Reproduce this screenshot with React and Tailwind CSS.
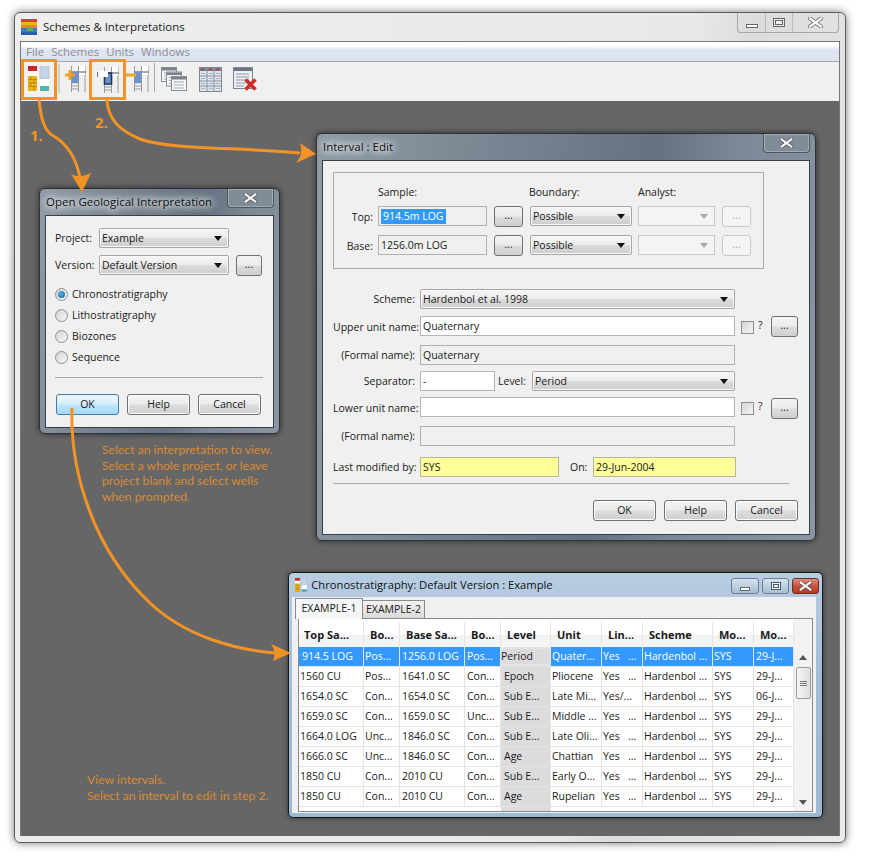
const btnClass =
  "flex items-center justify-center rounded-[3px] border border-[#707070] bg-[linear-gradient(#f4f4f4,#ebebeb_48%,#dddddd_52%,#cfcfcf)] shadow-[inset_0_0_0_1px_#fbfbfb]";

function Button({ className = "", children }) {
  return <div className={`${btnClass} ${className}`}>{children}</div>;
}

function Dots({ className = "", disabled }) {
  return (
    <div
      className={`flex items-end justify-center rounded-[3px] border pb-[2px] ${
        disabled
          ? "border-[#c9c9c9] bg-[#f4f4f4] text-[#a8a8a8]"
          : "border-[#707070] bg-[linear-gradient(#f4f4f4,#ebebeb_48%,#dddddd_52%,#cfcfcf)] text-[#222]"
      } ${className}`}
    >
      ...
    </div>
  );
}

function Combo({ value, className = "", disabled }) {
  return (
    <div
      className={`flex items-center justify-between border pl-[2px] pr-[6px] ${
        disabled
          ? "border-[#c9c9c9] bg-[#f4f4f4]"
          : "rounded-[2px] border-[#a5a5a5] bg-[linear-gradient(#f6f6f6,#ececec_48%,#dcdcdc_52%,#cdcdcd)] shadow-[inset_0_0_0_1px_#f8f8f8]"
      } ${className}`}
    >
      <span className="pt-[1px]">{value}</span>
      <svg width="8" height="5" viewBox="0 0 8 5">
        <path d="M0 0h8L4 5z" fill={disabled ? "#aaaaaa" : "#111111"} />
      </svg>
    </div>
  );
}

function Field({ value, className = "", tone = "white" }) {
  const tones = {
    white: "bg-white border-[#b5b5b5]",
    off: "bg-[#f0f0f0] border-[#b0b0b0]",
    note: "bg-[#ffff99] border-[#b5b5a0]",
  };
  return (
    <div className={`flex items-center border pl-[2px] pt-[1px] ${tones[tone]} ${className}`}>{value}</div>
  );
}

function Radio({ label, on }) {
  return (
    <div className="flex h-[21px] items-center gap-[4px]">
      <span className="flex h-[13px] w-[13px] items-center justify-center rounded-full border border-[#8e8f8f] bg-[linear-gradient(135deg,#d4d4d4,#f6f6f6)]">
        {on && <span className="h-[7px] w-[7px] rounded-full bg-[radial-gradient(circle_at_40%_40%,#5fb2e8,#0b5f95)]" />}
      </span>
      <span className="pt-[1px]">{label}</span>
    </div>
  );
}

function XGlyph({ w = 13, h = 10 }) {
  return (
    <svg width={w} height={h} viewBox="0 0 15 11">
      <path d="M2 1.500 13 9.500M13 1.500 2 9.500" stroke="#555" strokeWidth="4" strokeLinecap="square" />
      <path d="M2 1.500 13 9.500M13 1.500 2 9.500" stroke="#fff" strokeWidth="2.400" strokeLinecap="square" />
    </svg>
  );
}

function Dialog({ title, className = "", bodyClass = "", children }) {
  return (
    <div
      className={`absolute flex flex-col rounded-[6px] border border-[#2e3236] bg-[linear-gradient(100deg,#8f9ba6,#7d8995_25%,#647281_60%,#7c8996_75%,#8a96a2)] px-[5px] pb-[5px] shadow-[0_0_6px_rgba(0,0,0,0.6)] ${className}`}
    >
      <div className="flex h-[26px] shrink-0 items-center justify-between">
        <span className="pl-[1px] text-[11.500px] text-[#111] [text-shadow:0_0_7px_#fff,0_0_9px_#fff,0_0_12px_#fff]">{title}</span>
        <div className="flex h-[19px] w-[47px] items-center justify-center self-start rounded-b-[4px] border border-t-0 border-[#4d5862] bg-[#808c98] shadow-[inset_0_0_0_1px_#a2acb5]">
          <XGlyph />
        </div>
      </div>
      <div className={`flex-1 border border-[#3a3f44] bg-[#f0f0f0] text-[10.500px] text-[#1a1a1a] ${bodyClass}`}>{children}</div>
    </div>
  );
}

function OpenDialog() {
  return (
    <Dialog title="Open Geological Interpretation" className="left-[18px] top-[87px] h-[246px] w-[241px]" bodyClass="pl-[9px] pr-[10px] pt-[12px]">
      <div className="flex h-[20px] items-center">
        <span className="w-[44px] pt-[1px]">Project:</span>
        <Combo value="Example" className="h-[20px] w-[130px]" />
      </div>
      <div className="mt-[7px] flex h-[20px] items-center">
        <span className="w-[44px] pt-[1px]">Version:</span>
        <Combo value="Default Version" className="h-[20px] w-[130px]" />
        <Dots className="ml-[7px] h-[21px] w-[26px]" />
      </div>
      <div className="mt-[9px]">
        <Radio label="Chronostratigraphy" on />
        <Radio label="Lithostratigraphy" />
        <Radio label="Biozones" />
        <Radio label="Sequence" />
      </div>
      <div className="mt-[9px] h-px bg-[#a9a9a9]" />
      <div className="mt-[16px] flex gap-[8px] pl-[1px]">
        <div className="flex h-[21px] w-[63px] items-center justify-center rounded-[3px] border border-[#3c7fb1] bg-[linear-gradient(#eaf6fd,#d6effc_48%,#bee6fd_52%,#a7d9f5)]">OK</div>
        <Button className="h-[21px] w-[63px]">Help</Button>
        <Button className="h-[21px] w-[63px]">Cancel</Button>
      </div>
    </Dialog>
  );
}

function Label({ children }) {
  return <span className="w-[87px] shrink-0 whitespace-nowrap pr-[5px] pt-[1px] text-right">{children}</span>;
}

function SampleRow({ label, children, mt }) {
  return (
    <div className={`flex items-start ${mt}`}>
      <span className="h-[20px] w-[43px] pr-[5px] pt-[1px] text-right leading-[20px]">{label}</span>
      {children}
      <Dots className="ml-[7px] h-[21px] w-[29px]" />
      <Combo value="Possible" className="ml-[7px] h-[20px] w-[102px]" />
      <Combo value="" disabled className="ml-[6px] h-[20px] w-[77px]" />
      <Dots disabled className="ml-[7px] h-[21px] w-[29px]" />
    </div>
  );
}

function UnitCheck({ dotsClass = "" }) {
  return (
    <>
      <span className="ml-[6px] mt-[5px] h-[13px] w-[13px] border border-[#8e8f8f] bg-[linear-gradient(135deg,#d4d4d4,#f6f6f6)]" />
      <span className="ml-[4px] mt-[2px] w-[6px]">?</span>
      <Dots className={`ml-[7px] h-[21px] w-[27px] ${dotsClass}`} />
    </>
  );
}

function EditDialog() {
  return (
    <Dialog title="Interval : Edit" className="left-[295px] top-[32px] h-[408px] w-[500px]" bodyClass="pl-[10px] pt-[11px]">
      <div className="h-[97px] w-[431px] border border-[#a9a9a9] pl-[1px] pt-[13px]">
        <div className="flex h-[13px] items-center leading-[13px]">
          <span className="ml-[43px] w-[151px]">Sample:</span>
          <span className="w-[109px]">Boundary:</span>
          <span>Analyst:</span>
        </div>
        <SampleRow label="Top:" mt="mt-[7px]">
          <Field
            className="h-[20px] w-[109px]"
            tone="off"
            value={<span className="bg-[#3399ff] px-[2px] text-white">914.5m LOG</span>}
          />
        </SampleRow>
        <SampleRow label="Base:" mt="mt-[8px]">
          <Field className="h-[20px] w-[109px]" tone="off" value="1256.0m LOG" />
        </SampleRow>
      </div>
      <div className="mt-[20px] flex h-[20px] items-center">
        <Label>Scheme:</Label>
        <Combo value="Hardenbol et al. 1998" className="h-[20px] w-[315px]" />
      </div>
      <div className="mt-[7px] flex items-start">
        <span className="w-[87px] shrink-0 whitespace-nowrap pr-[5px] pt-[1px] text-right leading-[20px]">Upper unit name:</span>
        <Field value="Quaternary" className="h-[20px] w-[315px]" />
        <UnitCheck />
      </div>
      <div className="mt-[8px] flex items-center">
        <Label>(Formal name):</Label>
        <Field value="Quaternary" tone="off" className="h-[20px] w-[315px]" />
      </div>
      <div className="mt-[6px] flex items-center">
        <Label>Separator:</Label>
        <Field value="-" className="h-[20px] w-[75px]" />
        <span className="ml-[3px] w-[34px] pt-[1px]">Level:</span>
        <Combo value="Period" className="h-[20px] w-[203px]" />
      </div>
      <div className="mt-[6px] flex h-[20px] items-start">
        <span className="w-[87px] shrink-0 whitespace-nowrap pr-[5px] pt-[1px] text-right leading-[20px]">Lower unit name:</span>
        <Field value="" className="h-[20px] w-[315px]" />
        <UnitCheck dotsClass="mt-[1px]" />
      </div>
      <div className="mt-[9px] flex items-center">
        <Label>(Formal name):</Label>
        <Field value="" tone="off" className="h-[20px] w-[315px]" />
      </div>
      <div className="mt-[11px] flex items-center">
        <Label>Last modified by:</Label>
        <Field value="SYS" tone="note" className="h-[20px] w-[139px]" />
        <span className="ml-[11px] w-[23px] pt-[1px]">On:</span>
        <Field value="29-Jun-2004" tone="note" className="h-[20px] w-[143px]" />
      </div>
      <div className="mt-[6px] h-px w-[456px] bg-[#a9a9a9]" />
      <div className="ml-[260px] mt-[16px] flex gap-[8px]">
        <Button className="h-[21px] w-[63px]">OK</Button>
        <Button className="h-[21px] w-[63px]">Help</Button>
        <Button className="h-[21px] w-[63px]">Cancel</Button>
      </div>
    </Dialog>
  );
}

const columns = [65, 36, 65, 36, 50, 51, 41, 70, 41, 40];
const cellPad = ["pl-[1px]", "pl-[1px]", "pl-[2px]", "pl-[2px]", "pl-[3px]", "pl-[1px]", "pl-[1px]", "pl-[1px]", "pl-[1px]", "pl-[2px]"];
const headers = ["Top Sa...", "Bo...", "Base Sa...", "Bo...", "Level", "Unit", "Lin...", "Scheme", "Mo...", "Mo..."];
const rows = [
  ["914.5 LOG", "Pos...", "1256.0 LOG", "Pos...", "Period", "Quater...", "Yes   ...", "Hardenbol ...", "SYS", "29-J..."],
  ["1560 CU", "Pos...", "1641.0 SC", "Con...", "Epoch", "Pliocene", "Yes   ...", "Hardenbol ...", "SYS", "29-J..."],
  ["1654.0 SC", "Con...", "1654.0 SC", "Con...", "Sub E...", "Late Mi...", "Yes/...", "Hardenbol ...", "SYS", "06-J..."],
  ["1659.0 SC", "Con...", "1659.0 SC", "Unc...", "Sub E...", "Middle ...", "Yes   ...", "Hardenbol ...", "SYS", "29-J..."],
  ["1664.0 LOG", "Unc...", "1846.0 SC", "Con...", "Sub E...", "Late Oli...", "Yes   ...", "Hardenbol ...", "SYS", "29-J..."],
  ["1666.0 SC", "Unc...", "1846.0 SC", "Con...", "Age", "Chattian", "Yes   ...", "Hardenbol ...", "SYS", "29-J..."],
  ["1850 CU", "Con...", "2010 CU", "Con...", "Sub E...", "Early O...", "Yes   ...", "Hardenbol ...", "SYS", "29-J..."],
  ["1850 CU", "Con...", "2010 CU", "Con...", "Age", "Rupelian", "Yes   ...", "Hardenbol ...", "SYS", "29-J..."],
];

function cellTone(r, i) {
  if (r === 0 && i === 4) return "border-y-2 border-[#3399ff] bg-[#dcdcdc] text-[#1a1a1a] pl-0";
  if (r === 0 && i === 0) return "bg-[#3399ff] pl-[3px]";
  if (r === 0) return `bg-[#3399ff] ${cellPad[i]}`;
  if (i === 4) return `bg-[#dcdcdc] ${cellPad[i]}`;
  return cellPad[i];
}

function IntervalTable() {
  return (
    <div className="flex h-[194px] w-[515px] border border-[#8a8a8a] bg-white text-[10.500px] text-[#1a1a1a]">
      <div className="w-[495px] overflow-hidden">
        <div className="mt-[3px] flex h-[25px]">
          {headers.map((h, i) => (
            <div
              key={i}
              style={{ width: columns[i] }}
              className="flex shrink-0 items-center whitespace-nowrap border-r border-[#e6e6e6] bg-[linear-gradient(#ffffff_50%,#f2f2f2_52%,#f7f7f7)] pl-[6px] pt-[1px] text-[11px] font-bold first:pl-[5px]"
            >
              {h}
            </div>
          ))}
        </div>
        {rows.map((row, r) => (
          <div key={r} className={`flex h-[20px] border-b border-[#e4e4e4] ${r === 0 ? "text-white" : ""}`}>
            {row.map((cell, i) => (
              <div
                key={i}
                style={{ width: columns[i] }}
                className={`flex shrink-0 items-center overflow-hidden whitespace-pre border-r border-[#e4e4e4] ${cellTone(r, i)}`}
              >
                {cell}
              </div>
            ))}
          </div>
        ))}
        <div className="flex h-[5px]">
          <div className="ml-[202px] h-full w-[50px] bg-[#dcdcdc]" />
        </div>
      </div>
      <div className="w-[18px] bg-[#f2f2f2] pt-[28px]">
        <svg className="mx-auto mt-[8px]" width="8" height="5" viewBox="0 0 8 5">
          <path d="M4 0l4 5H0z" fill="#555" />
        </svg>
        <div className="ml-[2px] mt-[7px] flex h-[32px] w-[15px] flex-col items-center justify-center gap-[1px] rounded-[2px] border border-[#9a9a9a] bg-[linear-gradient(90deg,#f6f6f6,#dedede)]">
          <span className="h-px w-[7px] bg-[#777]" />
          <span className="h-px w-[7px] bg-[#777]" />
          <span className="h-px w-[7px] bg-[#777]" />
        </div>
        <svg className="mx-auto mt-[101px]" width="8" height="5" viewBox="0 0 8 5">
          <path d="M0 0h8L4 5z" fill="#555" />
        </svg>
      </div>
    </div>
  );
}

function TableWindow() {
  return (
    <div className="absolute left-[267px] top-[471px] flex h-[246px] w-[535px] flex-col rounded-[5px] border border-[#15181c] bg-[linear-gradient(#b8cde2,#a4bdd8_40%,#9bb8d4)] pb-[4px] pl-[3px] pr-[6px] shadow-[0_0_5px_rgba(0,0,0,0.5)]">
      <div className="flex h-[24px] shrink-0 items-center justify-between">
        <div className="flex items-center gap-[4px] pl-[3px] text-[11.200px] text-[#111]">
          <BlocksIcon size={14} />
          <span>Chronostratigraphy: Default Version : Example</span>
        </div>
        <div className="-mr-[3px] mt-[1px] flex gap-[3px]">
          <div className="flex h-[16px] w-[28px] items-end justify-center rounded-[3px] border border-[#6a7f93] bg-[linear-gradient(#d6e1ec,#a9bed3)] pb-[2px]">
            <span className="h-[4px] w-[10px] border border-[#5b6a78] bg-white" />
          </div>
          <div className="flex h-[16px] w-[27px] items-center justify-center rounded-[3px] border border-[#6a7f93] bg-[linear-gradient(#d6e1ec,#a9bed3)]">
            <span className="h-[8px] w-[10px] border border-[#4b5a68] bg-[#eef2f6] p-[1px]">
              <span className="block h-full w-full border border-[#4b5a68]" />
            </span>
          </div>
          <div className="flex h-[16px] w-[27px] items-center justify-center rounded-[3px] border border-[#6b2a22] bg-[linear-gradient(#dc8f80,#c9513c_50%,#b43a24)]">
            <XGlyph w={13} h={10} />
          </div>
        </div>
      </div>
      <div className="relative flex-1 bg-[#f0f0f0] pl-[6px] pt-[21px]">
        <div className="absolute left-[3px] top-[1px] flex text-[10.500px] text-[#1a1a1a]">
          <div className="z-10 flex h-[21px] w-[68px] items-center justify-center border border-b-0 border-[#8a8a8a] bg-[#f4f6f8]">EXAMPLE-1</div>
          <div className="mt-[2px] flex h-[19px] w-[62px] items-center justify-center border border-l-0 border-[#8a8a8a] bg-[linear-gradient(#f2f2f2,#d9d9d9)]">EXAMPLE-2</div>
        </div>
        <IntervalTable />
      </div>
    </div>
  );
}

function BlocksIcon({ size = 25 }) {
  return (
    <svg width={size * 0.88} height={size} viewBox="0 0 22 25" className="shrink-0">
      <rect x="0" y="0" width="9" height="5" fill="#d2232a" />
      <rect x="0" y="5" width="9" height="5" fill="#fff" />
      <rect x="0" y="10" width="9" height="15" fill="#eab419" />
      <path d="M0 13.500h9M0 17h9M0 20.500h9M3 10v3.500M6 13.500V17M3 17v3.500M6 20.500V25" stroke="#b27f0d" strokeWidth="0.8" />
      <rect x="12" y="0" width="9" height="13" fill="#c3d4e8" stroke="#a9b8cc" strokeWidth="0.6" />
      <rect x="12" y="13" width="9" height="7" fill="#fff" />
      <rect x="12" y="20" width="9" height="5" fill="#4fb6ab" />
    </svg>
  );
}

function LadderIcon({ mark }) {
  return (
    <svg width="24" height="28" viewBox="0 0 24 28" className="shrink-0">
      <path d="M8.500 1v26M15.500 1v26M22 1v26" stroke="#9a9a9a" strokeWidth="1" fill="none" />
      <path d="M8 21h8M8 24h8" stroke="#9a9a9a" strokeWidth="1" />
      <rect x="16" y="1" width="6" height="9" fill="#fff" />
      <path d="M8 7h15" stroke="#555" strokeWidth="1" />
      <rect x="8.500" y="7" width="7" height="11" fill="#6f93c9" stroke={mark === "edit" ? "#1f3560" : "#7d95ba"} strokeWidth={mark === "edit" ? 1.6 : 0.6} />
      {mark === "plus" && <path d="M7 5v10M2 10h10" stroke="#eea321" strokeWidth="3" />}
      {mark === "minus" && <path d="M0 10h10" stroke="#eea321" strokeWidth="3" />}
      {mark === "edit" && (
        <>
          <rect x="4" y="5" width="8" height="6" fill="#fff" />
          <path d="M1.500 6v5" stroke="#777" strokeWidth="1" />
        </>
      )}
    </svg>
  );
}

function StackIcon() {
  return (
    <svg width="26" height="25" viewBox="0 0 26 25" className="shrink-0">
      {[0, 5, 10].map((o) => (
        <g key={o}>
          <rect x={o + 0.5} y={o * 0.9 + 0.5} width="15" height="14" fill="#f5f6f8" stroke="#878c95" />
          <rect x={o + 1} y={o * 0.9 + 1} width="14" height="2.500" fill="#7a818c" />
          <path d={`M${o + 3} ${o * 0.9 + 6}h10M${o + 3} ${o * 0.9 + 9}h10M${o + 3} ${o * 0.9 + 12}h10`} stroke="#a5aab3" strokeWidth="1" />
        </g>
      ))}
    </svg>
  );
}

function GridIcon() {
  return (
    <svg width="23" height="25" viewBox="0 0 23 25" className="shrink-0">
      <rect x="0.500" y="0.500" width="22" height="24" fill="#dfe3ec" stroke="#7e8796" />
      <rect x="1" y="1" width="21" height="3" fill="#7b7f8a" />
      <path d="M2 2.500h3M10 2.500h3M17 2.500h3" stroke="#c23b3b" strokeWidth="1.500" />
      <path d="M8 1v23M15 1v23M1 9h21M1 14h21M1 19h21" stroke="#8a93a3" strokeWidth="1" />
      <path d="M2 6.500h4M10 6.500h4M17 6.500h4M2 11.500h4M10 11.500h4M17 11.500h4M2 16.500h4M10 16.500h4M17 16.500h4M2 21.500h4M10 21.500h4M17 21.500h4" stroke="#aab2bf" strokeWidth="1" />
    </svg>
  );
}

function DeleteIcon() {
  return (
    <svg width="25" height="24" viewBox="0 0 25 24" className="shrink-0">
      <rect x="0.500" y="0.500" width="19" height="21" fill="#eceef2" stroke="#7e8796" />
      <rect x="1" y="1" width="18" height="3" fill="#6c7380" />
      <path d="M3 7h13M3 10h13M3 13h13M3 16h10M3 19h8" stroke="#9098a6" strokeWidth="1" />
      <path d="M12.500 12.500 22.500 22.500M22.500 12.500 12.500 22.500" stroke="#cf2b2b" strokeWidth="3.600" />
    </svg>
  );
}

function Highlight({ className = "", children }) {
  return (
    <div className={`z-10 -mt-[3px] flex h-[41px] shrink-0 items-center justify-center border-[3px] border-[#f39325] bg-[#f0f0f0] ${className}`}>
      {children}
    </div>
  );
}

function Toolbar() {
  return (
    <div className="flex h-[39px] shrink-0 items-start bg-[#f0f0f0]">
      <Highlight className="w-[36px] pb-[3px]">
        <BlocksIcon />
      </Highlight>
      <span className="ml-[1px] mt-[2px] h-[29px] w-[2px] bg-[#cfcfcf]" />
      <span className="ml-[3px] mt-[3px]">
        <LadderIcon mark="plus" />
      </span>
      <Highlight className="ml-[2px] w-[37px]">
        <LadderIcon mark="edit" />
      </Highlight>
      <span className="mt-[3px]">
        <LadderIcon mark="minus" />
      </span>
      <span className="ml-[4px] mt-[1px] h-[29px] w-px bg-[#a9a9a9]" />
      <span className="ml-[6px] mt-[5px]">
        <StackIcon />
      </span>
      <span className="ml-[12px] mt-[5px]">
        <GridIcon />
      </span>
      <span className="ml-[11px] mt-[5px]">
        <DeleteIcon />
      </span>
    </div>
  );
}

function AppIcon() {
  return (
    <svg width="16" height="16" viewBox="0 0 16 16">
      <rect width="16" height="3" fill="#d2452a" />
      <rect y="3" width="16" height="3" fill="#eab419" />
      <rect y="6" width="16" height="3" fill="#e8862b" />
      <rect y="9" width="16" height="4" fill="#3f78c4" />
      <rect x="6" y="8" width="6" height="4" fill="#63b05f" />
      <rect y="13" width="16" height="3" fill="#2a5ea8" />
    </svg>
  );
}

function Arrows() {
  const c = "#f39325";
  return (
    <svg className="pointer-events-none absolute left-0 top-0" width="877" height="863" viewBox="0 0 877 863" fill="none">
      <path d="M39 100C41 118 44 130 52 135C66 143 76 156 80 178" stroke={c} strokeWidth="3" />
      <path d="M71 174Q80 179 91 173L82 192Z" fill={c} />
      <path d="M107 100C108 118 118 130 140 139C170 150 240 147 300 153" stroke={c} strokeWidth="3" />
      <path d="M300 143Q304 154 296 163L316 154Z" fill={c} />
      <path d="M72 408C70 470 92 548 150 603C185 636 235 650 276 653" stroke={c} strokeWidth="3" />
      <path d="M271 644Q277 652 273 661L291 653Z" fill={c} />
    </svg>
  );
}

export default function App() {
  return (
    <div className="relative h-[863px] w-[877px] overflow-hidden bg-white pl-[14px] pt-[12px] font-['Open_Sans','Liberation_Sans',sans-serif]">
      <div className="flex h-[831px] w-[832px] flex-col rounded-[6px] border border-[#5c5c5c] bg-[linear-gradient(100deg,#eeeeee,#e8e8e8_70%,#dcdcdc_76%,#ebebeb)] px-[5px] pb-[6px] shadow-[0_0_8px_rgba(0,0,0,0.55)]">
        <div className="relative flex h-[28px] shrink-0 items-center gap-[6px] pl-[1px] text-[11.400px] text-[#222]">
          <AppIcon />
          <span className="-mt-[1px]">Schemes &amp; Interpretations</span>
          <div className="absolute right-[1px] top-0 flex h-[20px] w-[102px] rounded-b-[4px] border border-t-0 border-[#a8a8a8]">
            <div className="flex w-[28px] items-end justify-center border-r border-[#bcbcbc] pb-[4px]">
              <span className="h-[4px] w-[12px] border border-[#666] bg-white" />
            </div>
            <div className="flex w-[27px] items-start justify-center border-r border-[#bcbcbc] pt-[5px]">
              <span className="h-[9px] w-[12px] border border-[#666] bg-[#eeeeee] p-[1px]">
                <span className="block h-full w-full border border-[#666]" />
              </span>
            </div>
            <div className="flex flex-1 items-center justify-center">
              <svg width="15" height="11" viewBox="0 0 15 11">
                <path d="M2 1.500 13 9.500M13 1.500 2 9.500" stroke="#666" strokeWidth="4" strokeLinecap="square" />
                <path d="M2 1.500 13 9.500M13 1.500 2 9.500" stroke="#f4f4f4" strokeWidth="2.400" strokeLinecap="square" />
              </svg>
            </div>
          </div>
        </div>
        <div className="flex min-h-0 flex-1 flex-col border-x border-t border-[#777]">
          <div className="flex h-[20px] shrink-0 items-center gap-[7px] border-b border-[#a9a9a9] bg-[linear-gradient(#ffffff,#ffffff_20%,#dfe5f3_40%,#dde3f2)] pl-[5px] text-[11.500px] text-[#8d8d8d]">
            <span>File</span>
            <span>Schemes</span>
            <span>Units</span>
            <span>Windows</span>
          </div>
          <Toolbar />
          <div className="relative flex-1 bg-[#666666]">
            <span className="absolute left-[9px] top-[23px] text-[15px] font-bold text-[#f39325]">1.</span>
            <span className="absolute left-[74px] top-[10px] text-[15px] font-bold text-[#f39325]">2.</span>
            <OpenDialog />
            <EditDialog />
            <TableWindow />
            <div className="absolute left-[81px] top-[341px] font-['Lato',sans-serif] text-[12.200px] leading-[15.600px] text-[#d98b34]">
              <p>Select an interpretation to view.</p>
              <p>Select a whole project, or leave</p>
              <p>project blank and select wells</p>
              <p>when prompted.</p>
            </div>
            <div className="absolute left-[66px] top-[671px] font-['Lato',sans-serif] text-[12.200px] leading-[15.600px] text-[#d98b34]">
              <p>View intervals.</p>
              <p>Select an interval to edit in step 2.</p>
            </div>
          </div>
        </div>
      </div>
      <Arrows />
    </div>
  );
}
